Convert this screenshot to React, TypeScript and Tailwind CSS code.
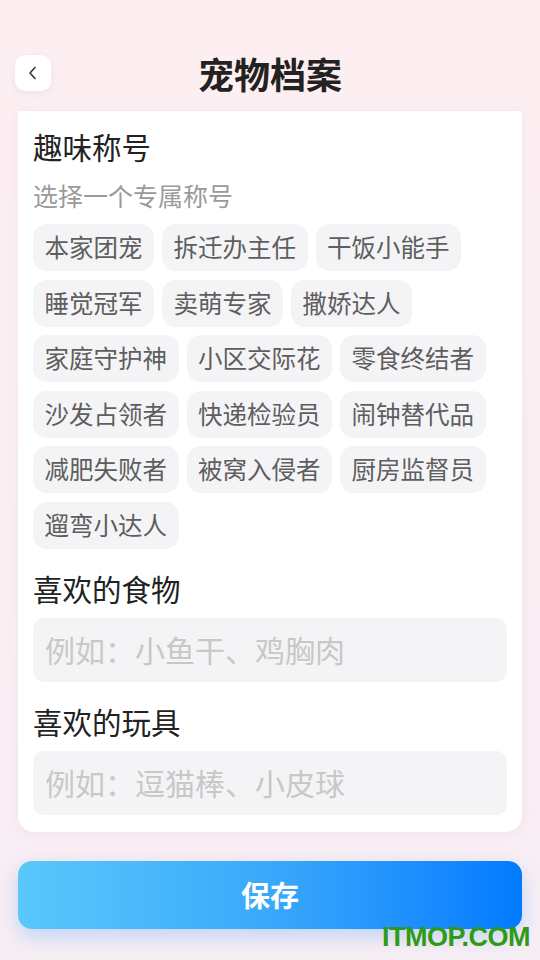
import React from "react";

const rows: string[][] = [
  ["本家团宠", "拆迁办主任", "干饭小能手"],
  ["睡觉冠军", "卖萌专家", "撒娇达人"],
  ["家庭守护神", "小区交际花", "零食终结者"],
  ["沙发占领者", "快递检验员", "闹钟替代品"],
  ["减肥失败者", "被窝入侵者", "厨房监督员"],
  ["遛弯小达人"],
];

const tags = rows.flat();

export default function App() {
  return (
    <div
      className="relative w-[540px] h-[960px] overflow-hidden flex flex-col bg-gradient-to-b from-[#fdeef1] to-[#f7eef4]"
      style={{ fontFamily: '"Noto Sans CJK SC", "Noto Sans", sans-serif' }}
    >
      {/* Header */}
      <div className="relative pt-[55px] h-[111px] shrink-0">
        <div className="relative h-[36px] flex items-center justify-center">
          <button className="absolute left-[15px] top-0 w-[36px] h-[36px] rounded-[10px] bg-white shadow-[0_2px_8px_rgba(0,0,0,0.06)] flex items-center justify-center">
            <svg width="10" height="14" viewBox="0 0 10 14" fill="none">
              <path d="M7 1.5L2 7l5 5.5" stroke="#333" strokeWidth="1.6" strokeLinecap="round" strokeLinejoin="round" />
            </svg>
          </button>
          <h1 className="text-[36px] leading-[44px] font-bold text-[#222]">宠物档案</h1>
        </div>
      </div>

      {/* Card */}
      <div className="mx-[18px] bg-white rounded-b-[16px] px-[15px] pt-[15px] pb-[17px] shadow-[0_2px_10px_rgba(230,200,210,0.25)]">
        <div className="text-[29.5px] leading-[40px] text-[#222]">趣味称号</div>
        <div className="mt-[12px] text-[25px] leading-[34px] text-[#9a9a9a]">选择一个专属称号</div>
        <div className="mt-[12px] flex flex-wrap gap-x-[8px] gap-y-[8.5px]">
          {tags.map((t) => (
            <div
              key={t}
              className="h-[47px] px-[11.5px] rounded-[14px] bg-[#f4f4f6] flex items-center text-[24.5px] text-[#5e5e5e]"
            >
              {t}
            </div>
          ))}
        </div>

        <div className="mt-[19px] text-[29.5px] leading-[40px] text-[#222]">喜欢的食物</div>
        <div className="mt-[10px] h-[64px] rounded-[11px] bg-[#f4f4f6] flex items-center px-[12px] text-[30px] text-[#c8c8c8]">
          例如：小鱼干、鸡胸肉
        </div>

        <div className="mt-[19px] text-[29.5px] leading-[40px] text-[#222]">喜欢的玩具</div>
        <div className="mt-[10px] h-[64px] rounded-[11px] bg-[#f4f4f6] flex items-center px-[12px] text-[30px] text-[#c8c8c8]">
          例如：逗猫棒、小皮球
        </div>
      </div>

      {/* Save button */}
      <div className="mx-[18px] mt-[29px]">
        <button className="w-full h-[68px] rounded-[14px] bg-gradient-to-r from-[#5ac8fa] via-[#3aa8fb] to-[#007aff] text-white text-[29px] font-bold flex items-center justify-center shadow-[0_8px_20px_rgba(0,122,255,0.22)]">
          保存
        </button>
      </div>

      {/* Watermark */}
      <div
        className="absolute right-[10px] top-[922px] text-[27px] font-bold text-[#2f9a17] tracking-[-0.5px] leading-[30px]"
        style={{ fontFamily: '"Liberation Sans", Arial, sans-serif' }}
      >
        ITMOP.COM
      </div>
    </div>
  );
}
